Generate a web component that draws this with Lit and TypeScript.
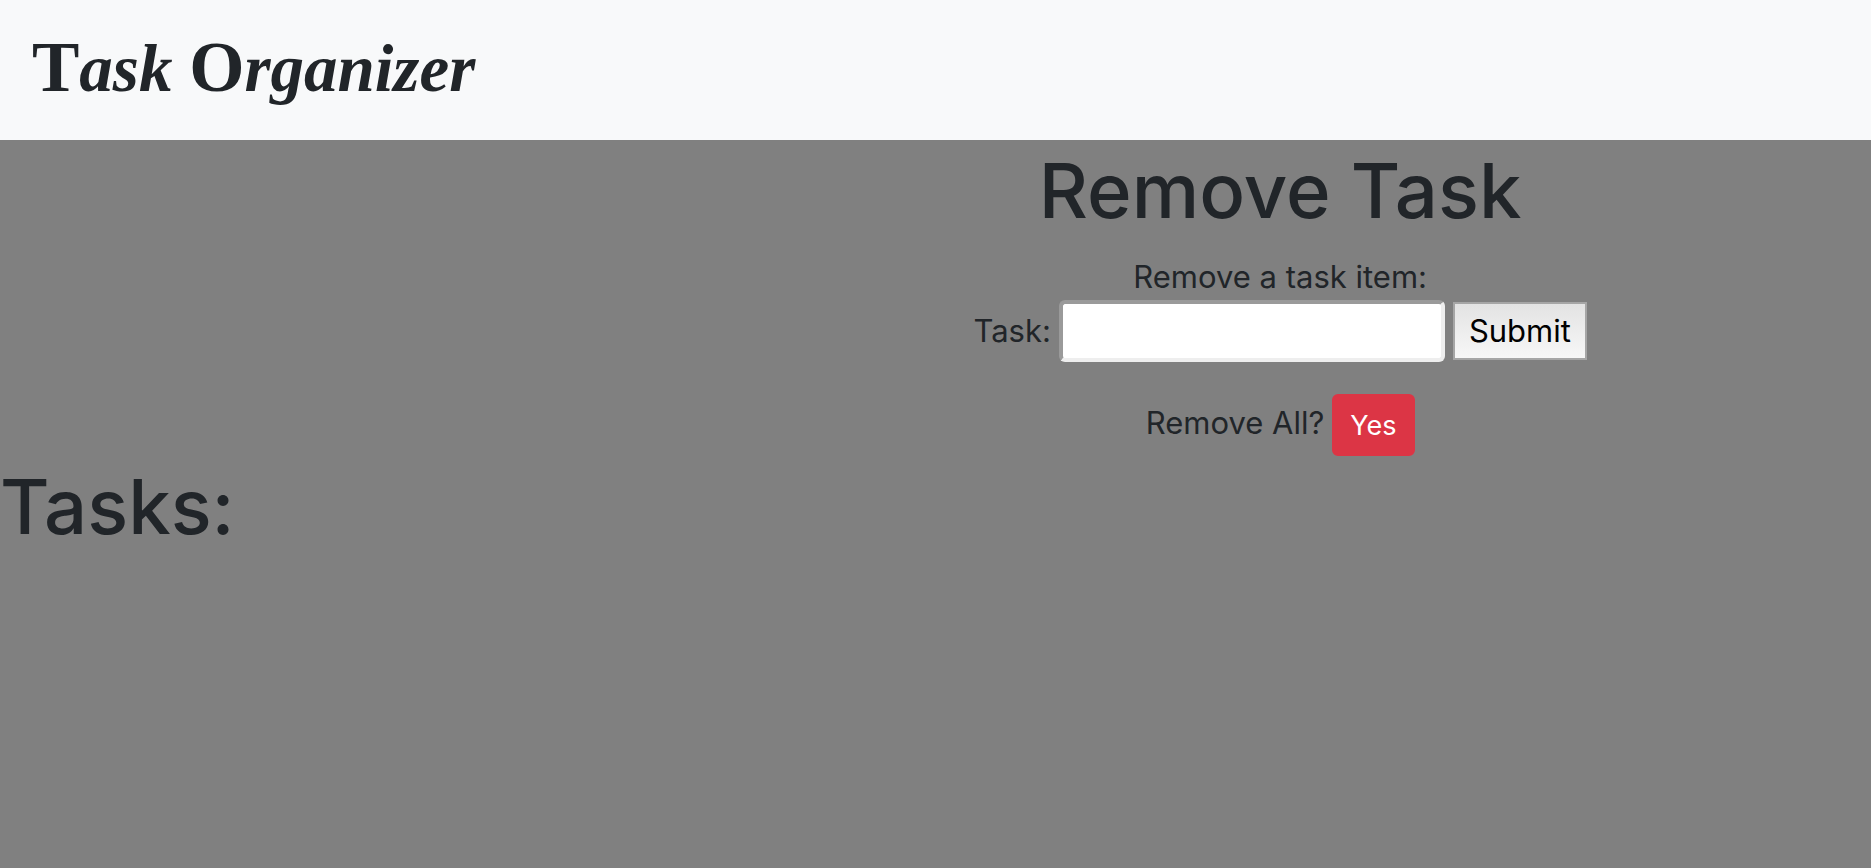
import { LitElement, html, css } from "lit";
import { customElement } from "lit/decorators.js";

@customElement("app-root")
export class AppRoot extends LitElement {
  static styles = css`
    :host {
      display: block;
      min-height: 100vh;
      background: #808080;
      color: #212529;
      font-family: Inter, "Liberation Sans", sans-serif;
      font-size: 31px;
      line-height: 48px;
    }
    * {
      box-sizing: border-box;
    }
    .navbar {
      padding: 8px 32px 12px;
      background: #f8f9fa;
    }
    .brand {
      display: block;
      color: inherit;
      text-decoration: none;
      font: italic bold 67px/120px "Liberation Serif", serif;
      white-space: nowrap;
    }
    .cap {
      font-style: normal;
      font-size: 71px;
      line-height: 1;
    }
    .page {
      display: grid;
      grid-template-columns: 7fr 12fr;
    }
    .panel {
      grid-column: 2;
      display: flex;
      flex-direction: column;
      align-items: center;
    }
    h1 {
      margin: 0;
      font-size: 76px;
      font-weight: 500;
      line-height: 100px;
    }
    .panel h1 {
      margin-bottom: 14px;
    }
    p {
      margin: 0;
      line-height: 46px;
    }
    .row {
      display: flex;
      align-items: center;
      gap: 8px;
    }
    form.row {
      margin-bottom: 32px;
    }
    input {
      width: 386px;
      height: 62px;
      padding: 2px;
      border: 4px solid;
      border-color: #9a9a9a #eeeeee #eeeeee #9a9a9a;
      border-radius: 6px;
      background: #fff;
      font: inherit;
    }
    .submit {
      height: 58px;
      padding: 0 14px;
      border: 2px solid #a6a6a6;
      background: linear-gradient(#e3e3e3, #f7f7f7);
      color: #000;
      font: inherit;
    }
    .prompt {
      padding-bottom: 4px;
    }
    .danger {
      padding: 9px 16px 7px;
      border: 2px solid #dc3545;
      border-radius: 6px;
      background: #dc3545;
      color: #fff;
      font: inherit;
      font-size: 27px;
      line-height: 42px;
    }
  `;

  render() {
    return html`
      <nav class="navbar">
        <a class="brand" href="#"
          ><span class="cap">T</span>ask <span class="cap">O</span>rganizer</a
        >
      </nav>
      <main>
        <div class="page">
          <section class="panel">
            <h1>Remove Task</h1>
            <p>Remove a task item:</p>
            <form class="row" @submit=${(e: Event) => e.preventDefault()}>
              <label for="task">Task:</label>
              <input id="task" name="task" type="text" />
              <button class="submit" type="submit">Submit</button>
            </form>
            <div class="row">
              <span class="prompt">Remove All?</span>
              <button class="danger" type="button">Yes</button>
            </div>
          </section>
        </div>
        <h1>Tasks:</h1>
      </main>
    `;
  }
}
